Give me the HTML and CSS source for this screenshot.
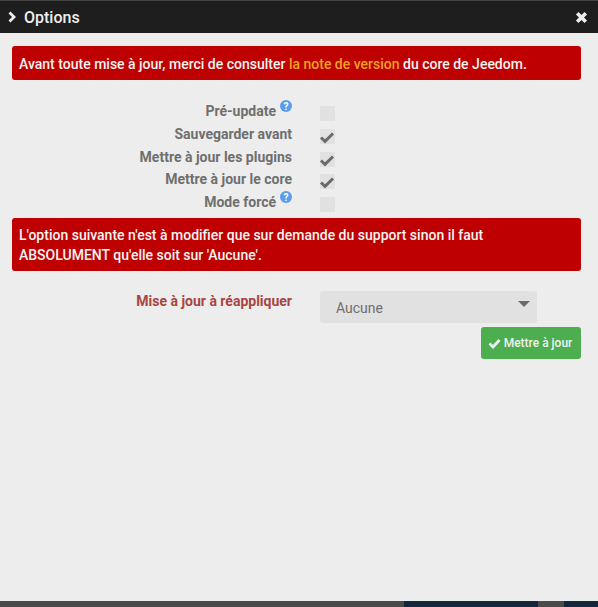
FILE: index.html
```html
<!DOCTYPE html>
<html lang="fr">
<head>
<meta charset="utf-8">
<title>Options</title>
<link rel="stylesheet" href="styles.css">
</head>
<body>
<div class="dialog">
  <header class="titlebar">
    <svg class="chev" viewBox="0 0 10 12" width="10" height="12"><path d="M2.500 1.500 7 6l-4.500 4.500" fill="none" stroke="#eee" stroke-width="2.800"/></svg>
    <span class="title">Options</span>
    <svg class="close" viewBox="0 0 13 13" width="13" height="13"><path d="M2.200 2.200l8.600 8.600M10.800 2.200l-8.600 8.600" fill="none" stroke="#eee" stroke-width="3.600"/></svg>
  </header>
  <main class="content">
    <div class="alert single">Avant toute mise à jour, merci de consulter <a class="link">la note de version</a> du core de Jeedom.</div>
    <form class="options">
      <div class="row"><label><span>Pré-update</span><svg class="help" viewBox="0 0 12 12" width="12" height="12"><circle cx="6" cy="6" r="6" fill="#5b9de8"/><text x="6" y="9.500" text-anchor="middle" class="q">?</text></svg></label><span class="box"></span></div>
      <div class="row"><label><span>Sauvegarder avant</span></label><span class="box"><svg viewBox="0 0 16 14" width="16" height="14"><path d="M2 7.500 6 11.300 14 3.500" fill="none" stroke="#6b6b6b" stroke-width="3"/></svg></span></div>
      <div class="row"><label><span>Mettre à jour les plugins</span></label><span class="box"><svg viewBox="0 0 16 14" width="16" height="14"><path d="M2 7.500 6 11.300 14 3.500" fill="none" stroke="#6b6b6b" stroke-width="3"/></svg></span></div>
      <div class="row"><label><span>Mettre à jour le core</span></label><span class="box"><svg viewBox="0 0 16 14" width="16" height="14"><path d="M2 7.500 6 11.300 14 3.500" fill="none" stroke="#6b6b6b" stroke-width="3"/></svg></span></div>
      <div class="row"><label><span>Mode forcé</span><svg class="help" viewBox="0 0 12 12" width="12" height="12"><circle cx="6" cy="6" r="6" fill="#5b9de8"/><text x="6" y="9.500" text-anchor="middle" class="q">?</text></svg></label><span class="box"></span></div>
    </form>
    <div class="alert double">L'option suivante n'est à modifier que sur demande du support sinon il faut ABSOLUMENT qu'elle soit sur 'Aucune'.</div>
    <div class="reapply">
      <label class="danger">Mise à jour à réappliquer</label>
      <div class="select"><span>Aucune</span><i class="caret"></i></div>
    </div>
    <div class="actions">
      <button type="button" class="btn"><svg viewBox="0 0 13 11" width="13" height="11"><path d="M1.500 5.500 5 9l6.500-7" fill="none" stroke="#f1f1f1" stroke-width="2.800"/></svg> Mettre à jour</button>
    </div>
  </main>
</div>
<div class="backdrop"><span class="s1"></span><span class="s2"></span><span class="s3"></span><span class="s4"></span></div>
</body>
</html>
```
FILE: styles.css
```css
* { box-sizing: border-box; }
html, body { margin: 0; height: 100%; }
body {
  display: flex;
  flex-direction: column;
  height: 607px;
  overflow: hidden;
  font-family: Roboto, "Liberation Sans", sans-serif;
  background: #4a4a4a;
}
.dialog {
  height: 601px;
  display: flex;
  flex-direction: column;
  background: #ecedec;
}
.titlebar {
  height: 33px;
  flex: none;
  display: flex;
  align-items: center;
  padding: 0 10px 0 7px;
  background: #1e1e1e;
  border-top: 1px solid #444;
  color: #eee;
}
.title { margin-left: 7px; font-size: 16px; font-weight: 500; }
.close { margin-left: auto; }
.content { padding: 13px 17px 0 12px; flex: 1; }
.alert {
  background: #bf0000;
  color: #f4f4f4;
  border-radius: 3px;
  font-size: 14px;
  font-weight: 500;
  line-height: 20px;
  padding: 8px 7px;
}
.single { height: 34px; }
.double { height: 53px; margin-top: 6px; padding-top: 7px; }
.link { color: #f0a020; }
.options { margin-top: 26px; display: flex; flex-direction: column; gap: 7.750px; }
.row { display: grid; grid-template-columns: 280px 15px; column-gap: 28px; height: 15px; }
.row label {
  display: flex;
  justify-content: flex-end;
  align-items: flex-start;
  height: 15px;
  margin-top: -2px;
  font-size: 14px;
  font-weight: 700;
  color: #6f6f6f;
  line-height: 15px;
  white-space: nowrap;
}
.help { flex: none; margin: -4px 0 0 4px; }
.box { width: 15px; height: 15px; background: #e0e1e0; display: block; position: relative; }
.box svg { position: absolute; left: -1px; top: 1px; }
.q { font: 700 10px Roboto, sans-serif; fill: #fff; }
.reapply { margin-top: 20px; display: grid; grid-template-columns: 280px 217px; column-gap: 28px; }
.danger { text-align: right; font-size: 14px; font-weight: 700; color: #a94442; line-height: 24px; margin-top: -2px; }
.select {
  height: 32px;
  background: #e0e1e0;
  border-radius: 3px;
  display: flex;
  align-items: center;
  padding: 2px 7px 0 16px;
  color: #6f6f6f;
  font-size: 14px;
}
.caret { margin-left: auto; margin-top: -8px; border: solid transparent; border-width: 6px 6px 0; border-top-color: #6b6b6b; }
.actions { display: flex; justify-content: flex-end; margin-top: 4px; }
.btn {
  height: 32px;
  width: 100px;
  border: 0;
  border-radius: 3px;
  background: #4cae4f;
  color: #f1f1f1;
  font: 500 12px Roboto, sans-serif;
  padding: 0 2px 0 0;
  display: flex;
  align-items: center;
  justify-content: center;
  gap: 3px;
}
.backdrop { height: 6px; display: flex; flex: none; }
.backdrop span { display: block; height: 6px; }
.s1 { width: 404px; background: #4a4a4a; }
.s2 { width: 134px; background: #14263b; }
.s3 { width: 26px; background: #4a4a4a; }
.s4 { width: 34px; background: #14263b; }
```
